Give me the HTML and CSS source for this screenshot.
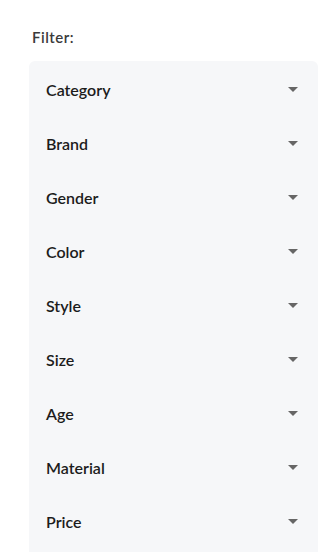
FILE: index.html
```html
<!DOCTYPE html>
<html lang="en">
<head>
    <meta charset="UTF-8">
    <meta name="viewport" content="width=device-width, initial-scale=1.0">
    <title>Filter</title>
    <link rel="stylesheet" href="styles.css">
</head>
<body>
    <div class="filter">
        <div class="filter-title">Filter:</div>
        <div class="filter-panel">
            <!-- One row per filter group -->
            <div class="filter-row"><span>Category</span><span class="arrow"></span></div>
            <div class="filter-row"><span>Brand</span><span class="arrow"></span></div>
            <div class="filter-row"><span>Gender</span><span class="arrow"></span></div>
            <div class="filter-row"><span>Color</span><span class="arrow"></span></div>
            <div class="filter-row"><span>Style</span><span class="arrow"></span></div>
            <div class="filter-row"><span>Size</span><span class="arrow"></span></div>
            <div class="filter-row"><span>Age</span><span class="arrow"></span></div>
            <div class="filter-row"><span>Material</span><span class="arrow"></span></div>
            <div class="filter-row"><span>Price</span><span class="arrow"></span></div>
        </div>
    </div>
</body>
</html>
```
FILE: styles.css
```css
body {
    margin: 0;
    font-family: Lato, "Liberation Sans", sans-serif;
    background: #fff;
}
.filter {
    padding: 27px 10px 0 29px;
}
.filter-title {
    padding-left: 3px;
    font-size: 15px;
    line-height: 20px;
    font-weight: 600;
    letter-spacing: 0.5px;
    color: #3a3a3a;
    margin-bottom: 14px;
}
.filter-panel {
    background: #f6f7f9;
    border-radius: 6px;
    padding: 1px 0 20px;
}
.filter-row {
    display: flex;
    justify-content: space-between;
    align-items: center;
    height: 54px;
    padding: 0 20px 0 17px;
    font-size: 16px;
    font-weight: 600;
    color: #1c1c1c;
}
.arrow {
    width: 0;
    height: 0;
    border-left: 5px solid transparent;
    border-right: 5px solid transparent;
    border-top: 5px solid #666;
    margin-top: 1px;
}
```
